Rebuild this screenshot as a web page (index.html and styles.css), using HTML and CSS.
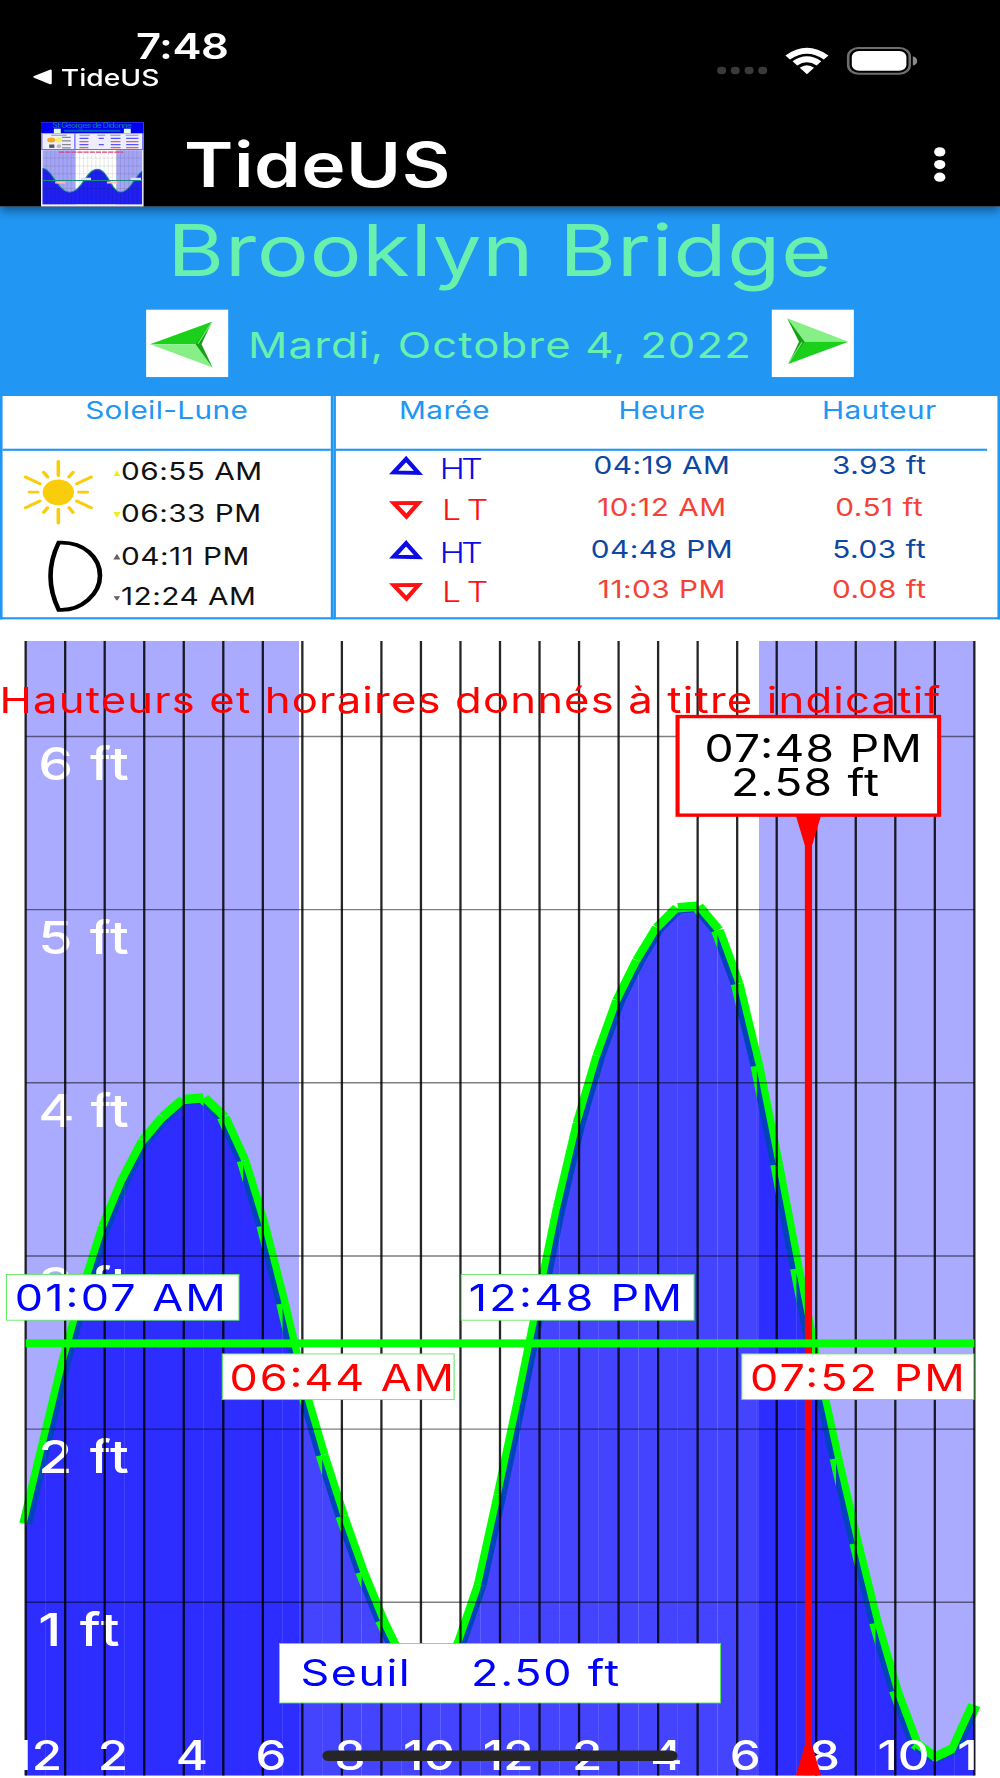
FILE: index.html
```html
<!DOCTYPE html>
<html lang="fr">
<head>
    <meta charset="UTF-8">
    <title>TideUS</title>
    <link rel="stylesheet" href="styles.css">
</head>
<body>
<div class="phone">
    <header class="top">
        <div class="status">
            <div class="status-left">
                <div class="clock">7:48</div>
                <div class="back">
                    <svg width="7.2" height="7" viewBox="0 0 7.2 7"><path d="M0.5 3.5L6.7 0.5V6.5Z" fill="#fff" stroke="#fff" stroke-linejoin="round"/></svg>
                    <span>TideUS</span>
                </div>
            </div>
            <div class="status-right">
                <svg width="78" height="14" viewBox="280 22 78 14">
                    <g fill="#3a3a3a">
                        <rect x="279.7" y="31.7" width="3.5" height="3.5" rx="1.6"/>
                        <rect x="285" y="31.7" width="3.5" height="3.5" rx="1.6"/>
                        <rect x="290.4" y="31.7" width="3.5" height="3.5" rx="1.6"/>
                        <rect x="295.7" y="31.7" width="3.5" height="3.5" rx="1.6"/>
                    </g>
                    <g fill="#fff">
                        <path d="M306.3 26.3Q314.7 19 323.1 26.3L321.3 28.3Q314.7 22.7 308.1 28.3Z"/>
                        <path d="M309.1 29.1Q314.7 24.4 320.3 29.1L318.5 31.1Q314.7 28 310.9 31.1Z"/>
                        <path d="M311.9 32.2Q314.7 29.8 317.5 32.2L314.7 35.2Z"/>
                        <rect x="332.2" y="24.2" width="21.3" height="9.4" rx="2.8"/>
                    </g>
                    <rect x="330.8" y="22.8" width="24" height="12.2" rx="4" fill="none" stroke="#6e6e6e"/>
                    <path d="M356 26.7Q357.7 27.2 357.7 28.9T356 31.1Z" fill="#8a8a8a"/>
                </svg>
            </div>
        </div>
        <div class="appbar">
            <svg class="logo" viewBox="0 0 40 40">
                <rect width="40" height="40" fill="#eef"/>
                <rect width="40" height="5.3" fill="#0000f0"/>
                <text x="20" y="2.9" font-size="3.3" fill="#008a8a" text-anchor="middle" textLength="31">St Georges de Didonne</text>
                <rect x="5" y="3.1" width="2.7" height="2.2" fill="#dfd"/>
                <rect x="32.3" y="3.1" width="2.7" height="2.2" fill="#dfd"/>
                <rect x="9" y="3.6" width="22" height="1" fill="#0060b0"/>
                <path d="M0.3 5.3V13M13.2 5.3V13M39.7 5.3V13M0 13H40" stroke="#6a6aff" stroke-width="0.5"/>
                <g fill="#f5a623"><ellipse cx="4" cy="8.5" rx="1.6" ry="1.2"/><circle cx="7" cy="8.4" r="1.2" fill="#f0f060"/></g>
                <rect x="3.2" y="10.6" width="2" height="1.6" fill="#555"/>
                <circle cx="7" cy="11.4" r=".9" fill="#bbb"/>
                <path d="M8.2 7.2H11.6M8.2 8.9H11.6M8.2 10.6H11.6M8.2 12.2H11.6" stroke="#888" stroke-width=".6"/>
                <path d="M4 6.2H10M15 6.2H19M22 6.2H25M27 6.2H31M33 6.2H38" stroke="#88f" stroke-width=".4"/>
                <path d="M15 7.7H18.5M27.2 7.7H31M33.2 7.7H38M15 10.6H18.5M22.5 10.6H24.5M27.2 10.6H31M33.2 10.6H38M22.5 7.7H24.5" stroke="#55f" stroke-width=".6"/>
                <path d="M15 9.2H18.5M27.2 9.2H31M33.2 9.2H38M15 12.1H18.5M27.2 12.1H31M33.2 12.1H38" stroke="#f55" stroke-width=".6"/>
                <rect x=".6" y="13.3" width="38.8" height="25.7" fill="#fff"/>
                <rect x=".6" y="13.3" width="12.8" height="25.7" fill="#a4a4f6"/>
                <rect x="29.4" y="13.3" width="10" height="25.7" fill="#a4a4f6"/>
                <path d="M.6 22C4 21.5 6.500 33 11 33.2C16 33.4 17.5 22.3 22 22.3C26 22.3 27.5 33.2 31 33.2C34.5 33.2 36 27 39.4 23.2V39H.6Z" fill="#2020f2"/>
                <path d="M.6 22C4 21.5 6.5 33 11 33.2C16 33.4 17.5 22.3 22 22.3C26 22.3 27.5 33.2 31 33.2C34.5 33.2 36 27 39.4 23.2M.6 27.7H39.4" fill="none" stroke="#189080" stroke-width=".45"/>
                <path d="M2.2 13.3V39M3.8 13.3V39M5.4 13.3V39M7 13.3V39M8.6 13.3V39M10.2 13.3V39M11.8 13.3V39M13.4 13.3V39M15 13.3V39M16.6 13.3V39M18.2 13.3V39M19.8 13.3V39M21.4 13.3V39M23 13.3V39M24.6 13.3V39M26.2 13.3V39M27.8 13.3V39M29.4 13.3V39M31 13.3V39M32.6 13.3V39M34.2 13.3V39M35.8 13.3V39M37.4 13.3V39M.6 17H39.4M.6 20.8H39.4M.6 24.5H39.4M.6 31.5H39.4" stroke="#000" stroke-opacity=".16" stroke-width=".25"/>
                <path d="M7 14.2H32" stroke="#e04070" stroke-width=".6" stroke-dasharray="2 .4"/>
                <path d="M5.5 28.6H9.5M25.7 28.6H29.7" stroke="#fbb" stroke-width="1"/>
                <path d="M15.5 26.9H19.5M35 26.9H39" stroke="#ddf" stroke-width="1"/>
            </svg>
            <h1 class="app-name">TideUS</h1>
            <svg class="menu" width="5" height="18" viewBox="0 0 5 18" fill="#fff"><circle cx="2.5" cy="3.1" r="2.2"/><circle cx="2.5" cy="9.1" r="2.2"/><circle cx="2.5" cy="15.1" r="2.2"/></svg>
        </div>
    </header>

    <section class="hero">
        <h2 class="place">Brooklyn Bridge</h2>
        <div class="day">
            <svg class="arrow" viewBox="0 0 32 32">
                <rect width="32" height="32" fill="#fff"/>
                <path d="M1.5 16.4L25.6 5.7L21 16.4Z" fill="#1bd01b"/>
                <path d="M1.5 16.4L25.9 27.4L21 16.4Z" fill="#86f086"/>
                <path d="M25.6 5.7L19.3 16.4L25.9 27.4L21.6 16.4Z" fill="#16a016"/>
                <path d="M25.3 6.5L20.2 16.2" stroke="#6fe86f" stroke-width=".5"/>
            </svg>
            <span class="date">Mardi, Octobre 4, 2022</span>
            <svg class="arrow" viewBox="0 0 32 32">
                <rect width="32" height="32" fill="#fff"/>
                <path d="M29.9 15.2L6 4.1L11 15.2Z" fill="#86f086"/>
                <path d="M29.9 15.2L6.5 25.8L11 15.2Z" fill="#1bd01b"/>
                <path d="M6 4.1L12.8 15.2L6.5 25.8L10.6 15.2Z" fill="#16a016"/>
                <path d="M6.8 25L11.8 15.5" stroke="#6fe86f" stroke-width=".5"/>
            </svg>
        </div>
    </section>

    <section class="tables">
        <div class="sky">
            <div class="head"><span>Soleil-Lune</span></div>
            <div class="sky-body">
                <svg class="sky-icons" viewBox="1 214 42 79">
                    <g transform="translate(22.75 233.7)" fill="#f9cd0b" stroke="#f9cd0b" stroke-width="1.4" stroke-linecap="round">
                        <circle r="5.4"/>
                        <path d="M0-8V-14.6M0 8V14.6M8-.1H11.3M-8-.1H-11.3M7.2-4.1L12.8-7.3M7.2 4.1L12.8 7.3M-7.2-4.1L-12.8-7.3M-7.2 4.1L-12.8 7.3M4.2-7.3L5.7-9.5M-4.2-7.3L-5.7-9.5M4.2 7.3L5.7 9.5M-4.2 7.3L-5.7 9.5"/>
                    </g>
                    <path d="M22.9 257.6C33 257 39 265 39 273.3S32 290.2 22.9 289.5Q16.5 273.5 22.9 257.6Z" fill="none" stroke="#000" stroke-width="1.8"/>
                </svg>
                <ul class="sky-times">
                    <li><i class="up sun"></i>06:55 AM</li>
                    <li><i class="down sun"></i>06:33 PM</li>
                    <li><i class="up moon"></i>04:11 PM</li>
                    <li><i class="down moon"></i>12:24 AM</li>
                </ul>
            </div>
        </div>
        <div class="tides">
            <div class="head"><span>Marée</span><span>Heure</span><span>Hauteur</span></div>
            <div class="row high">
                <svg class="kind" viewBox="0 0 40 13.4"><path d="M7.4 2.9L12.2 9.5L2.5 9.3Z"/><text x="20.5" y="12.2" textLength="16.8">HT</text></svg>
                <span>04:19 AM</span><span>3.93 ft</span>
            </div>
            <div class="row low">
                <svg class="kind" viewBox="0 0 40 13.4"><path d="M7.5 10.2L12.2 3.7L2.5 3.8Z"/><text x="21.4" y="11.9" textLength="18">LT</text></svg>
                <span>10:12 AM</span><span>0.51 ft</span>
            </div>
            <div class="row high">
                <svg class="kind" viewBox="0 0 40 13.4"><path d="M7.4 2.9L12.2 9.5L2.5 9.3Z"/><text x="20.5" y="12.2" textLength="16.8">HT</text></svg>
                <span>04:48 PM</span><span>5.03 ft</span>
            </div>
            <div class="row low">
                <svg class="kind" viewBox="0 0 40 13.4"><path d="M7.5 10.2L12.2 3.7L2.5 3.8Z"/><text x="21.4" y="11.9" textLength="18">LT</text></svg>
                <span>11:03 PM</span><span>0.08 ft</span>
            </div>
        </div>
    </section>

    <svg class="chart" viewBox="0 294 390 549.8">
        <rect class="night" x="10" y="304.3" width="106.6" height="538.5"/>
        <rect class="night" x="296" y="304.3" width="84" height="538.5"/>
        <g id="curve"></g>
        <g id="feet" class="feet"></g>
        <g id="grid"></g>
        <g id="hours" class="hours"></g>

        <text class="warn" x="-.2" y="338.3" textLength="367">Hauteurs et horaires donnés à titre indicatif</text>

        <!-- current time cursor -->
        <g fill="#f00">
            <rect x="313.9" y="388" width="2.8" height="454.7"/>
            <path d="M310.4 387.2H320.2L315.3 407Z"/>
            <path d="M310.4 842.7H320.2L315.3 823Z"/>
        </g>
        <rect x="264.25" y="340.15" width="102" height="46.8" fill="#fff" stroke="#f00" stroke-width="1.6"/>
        <text class="now" x="274.8" y="361.9" textLength="84.8">07:48 PM</text>
        <text class="now" x="285.1" y="377.8" textLength="57.8">2.58 ft</text>

        <rect x="10" y="635.8" width="370" height="3.8" fill="#0f0"/>

        <g class="box">
            <rect x="2.5" y="605" width="90.7" height="21.7"/>
            <rect x="179.9" y="605" width="90.8" height="21.7"/>
            <rect x="86.7" y="642.7" width="90.4" height="21.7"/>
            <rect x="289.3" y="642.7" width="90.5" height="21.7"/>
            <rect x="109" y="780.2" width="172" height="28.2"/>
        </g>
        <g class="rise">
            <text x="5.8" y="622.5" textLength="82.3">01:07 AM</text>
            <text x="182.8" y="622.5" textLength="83.2">12:48 PM</text>
            <text x="117.2" y="800.2" textLength="42.6">Seuil</text>
            <text x="183.7" y="800.2" textLength="57.8">2.50 ft</text>
        </g>
        <g class="fall">
            <text x="89.5" y="660.2" textLength="87.6">06:44 AM</text>
            <text x="292.5" y="660.2" textLength="83.8">07:52 PM</text>
        </g>
        <rect x="125.7" y="831" width="138.6" height="4.9" rx="2.45" fill="#262626"/>
    </svg>
</div>
<script src="script.js"></script>
</body>
</html>
```
FILE: styles.css
```css
*{margin: 0;padding: 0;box-sizing: border-box;}
ul,li{list-style: none;}
body{width: 1000px;height: 1778px;overflow: hidden;background: #fff;font-family: Inter,"Liberation Sans",sans-serif;}
svg{display: block;overflow: visible;}

/* 390x844 screen stretched over the whole window */
.phone{width: 390px;height: 844px;background: #fff;transform: scale(2.5641,2.1066);transform-origin: 0 0;}

.top{position: relative;height: 97.8px;background: #000;color: #fff;box-shadow: 0 2px 4px rgba(0,0,0,.4);z-index: 1;}
.status{display: flex;justify-content: space-between;height: 58.4px;padding: 0 32px 0 12.5px;}
.status-left{padding-top: 11.9px;}
.clock{padding-left: 40.5px;font-size: 17px;font-weight: 600;line-height: 20px;letter-spacing: -.2px;}
.back{display: flex;align-items: center;gap: 4px;font-size: 11px;font-weight: 500;line-height: 10px;letter-spacing: 0;}
.status-right{padding-top: 22px;}
.appbar{display: flex;align-items: center;height: 40px;padding: 0 21.4px 0 15.5px;}
.logo{width: 40px;height: 40px;flex: none;}
.app-name{flex: 1;padding: 2px 0 0 16.3px;font-size: 29.2px;font-weight: 600;line-height: 40px;letter-spacing: .2px;}

.hero{height: 90.4px;padding-top: .8px;background: #2196f3;color: #69f0ae;text-align: center;}
.place{font-size: 33.7px;font-weight: 400;line-height: 40px;letter-spacing: .35px;}
.day{display: flex;align-items: center;justify-content: center;height: 32px;margin-top: 8.9px;}
.arrow{width: 32px;height: 32px;flex: none;}
.date{width: 212.2px;padding-top: 1.2px;font-size: 17px;letter-spacing: .45px;white-space: nowrap;}

.tables{display: flex;height: 106px;font-size: 11.6px;line-height: 13.4px;}
.sky{width: 130px;border: solid #2196f3;border-width: 0 .7px .9px 1px;}
.tides{width: 260px;border: solid #2196f3;border-width: 0 .9px .9px .7px;}
.head{display: flex;height: 25.8px;padding-top: 1.2px;border-bottom: .8px solid #2196f3;color: #2196f3;letter-spacing: .15px;}
.head span{flex: 1;text-align: center;}
.tides .head,.row{width: 254.3px;}
.sky-body{display: flex;height: 79px;}
.sky-icons{width: 42px;height: 79px;}
.sky-times{padding: 4px 0 0 1.2px;color: #111;letter-spacing: .2px;}
.sky-times li{display: flex;align-items: center;height: 13.4px;margin-bottom: 6.4px;white-space: nowrap;}
.sky-times i{width: 2.8px;height: 2.8px;margin-right: .2px;}
.up{clip-path: polygon(50% 0,100% 100%,0 100%);}
.down{clip-path: polygon(0 0,100% 0,50% 100%);}
.sun{background: #eaf01c;}
.moon{background: #6d5f60;}
.row{display: flex;height: 13.4px;margin-bottom: 6.4px;}
.head + .row{margin-top: 1px;}
.row span{flex: 1;text-align: center;letter-spacing: .2px;}
.kind{width: 40px;height: 13.4px;margin: 0 24.77px 0 20px;flex: none;font-size: 13.2px;font-weight: 300;}
.kind path{fill: none;stroke-width: 1.8;}
.high{color: #0d47a1;}
.low{color: #f44336;}
.high .kind path{stroke: #0c0ce4;}
.high .kind text{fill: #0c0ce4;}
.low .kind path{stroke: #f11;}
.low .kind text{fill: #f11;}

.chart{width: 390px;height: 549.8px;}
.night{fill: #aaf;}
.tide{stroke: #0f0;stroke-width: 5;}
.water{fill: #00f;fill-opacity: .733;}
.v{stroke: #000;stroke-opacity: .85;stroke-width: .9;}
.h{stroke: #000;stroke-opacity: .5;stroke-width: .7;}
.feet{fill: #fff;font-size: 21.6px;font-weight: 500;}
.hours{fill: #fff;font-size: 19.2px;font-weight: 500;text-anchor: middle;}
.warn{fill: #f00;font-size: 17px;}
.now{font-size: 18px;}
.box{fill: #fff;stroke: #5be65b;stroke-width: .4;}
.rise{fill: #00f;font-size: 17.5px;}
.fall{fill: #f00;font-size: 17.5px;}
```
FILE: script.js
```js
var NS = "http://www.w3.org/2000/svg";
var x0 = 10, hour = 370/24, bottom = 842.8, foot = 82.2;

// water height every half hour, in feet
var tide = [1.453,1.93,2.40,2.81,3.17,3.446,3.664,3.80,3.90,3.91,3.80,3.55,3.174,
    2.725,2.24,1.85,1.496,1.174,.895,.66,.53,.55,.77,1.10,1.62,
    2.157,2.72,3.28,3.765,4.155,4.474,4.705,4.894,5.008,5.017,4.88,4.57,
    4.097,3.527,2.926,2.345,1.83,1.34,.88,.489,.184,.10,.155,.406];

function add(id, tag, attrs, text){
    var el = document.createElementNS(NS, tag);
    for(var k in attrs) el.setAttribute(k, attrs[k]);
    if(text) el.textContent = text;
    document.getElementById(id).appendChild(el);
}
function px(i){ return x0 + i*hour/2; }
function py(i){ return bottom - tide[i]*foot; }

for(var i=0;i<48;i++){
    add("curve", "line", {"class":"tide", x1:px(i), y1:py(i), x2:px(i+1), y2:py(i+1)});
    add("curve", "path", {"class":"water", d:"M"+px(i)+" "+(py(i)+2)+"L"+px(i+1)+" "+(py(i+1)+2)+"V"+bottom+"H"+px(i)+"Z"});
}
for(var f=1;f<=6;f++){
    var y = bottom - f*foot;
    add("feet", "text", {x:14.9, y:y+20.9, textLength:f==1?31.7:35.4}, f+" ft");
    add("grid", "line", {"class":"h", x1:x0, x2:380, y1:y, y2:y});
}
for(var h=0;h<=24;h++){
    var x = x0 + h*hour;
    add("grid", "line", {"class":"v", x1:x, x2:x, y1:304.3, y2:842.8});
    if(h%2 == 0) add("hours", "text", {x:x+(h ? 3.2 : 4.3), y:840.4}, h%12 || 12);
}
```
